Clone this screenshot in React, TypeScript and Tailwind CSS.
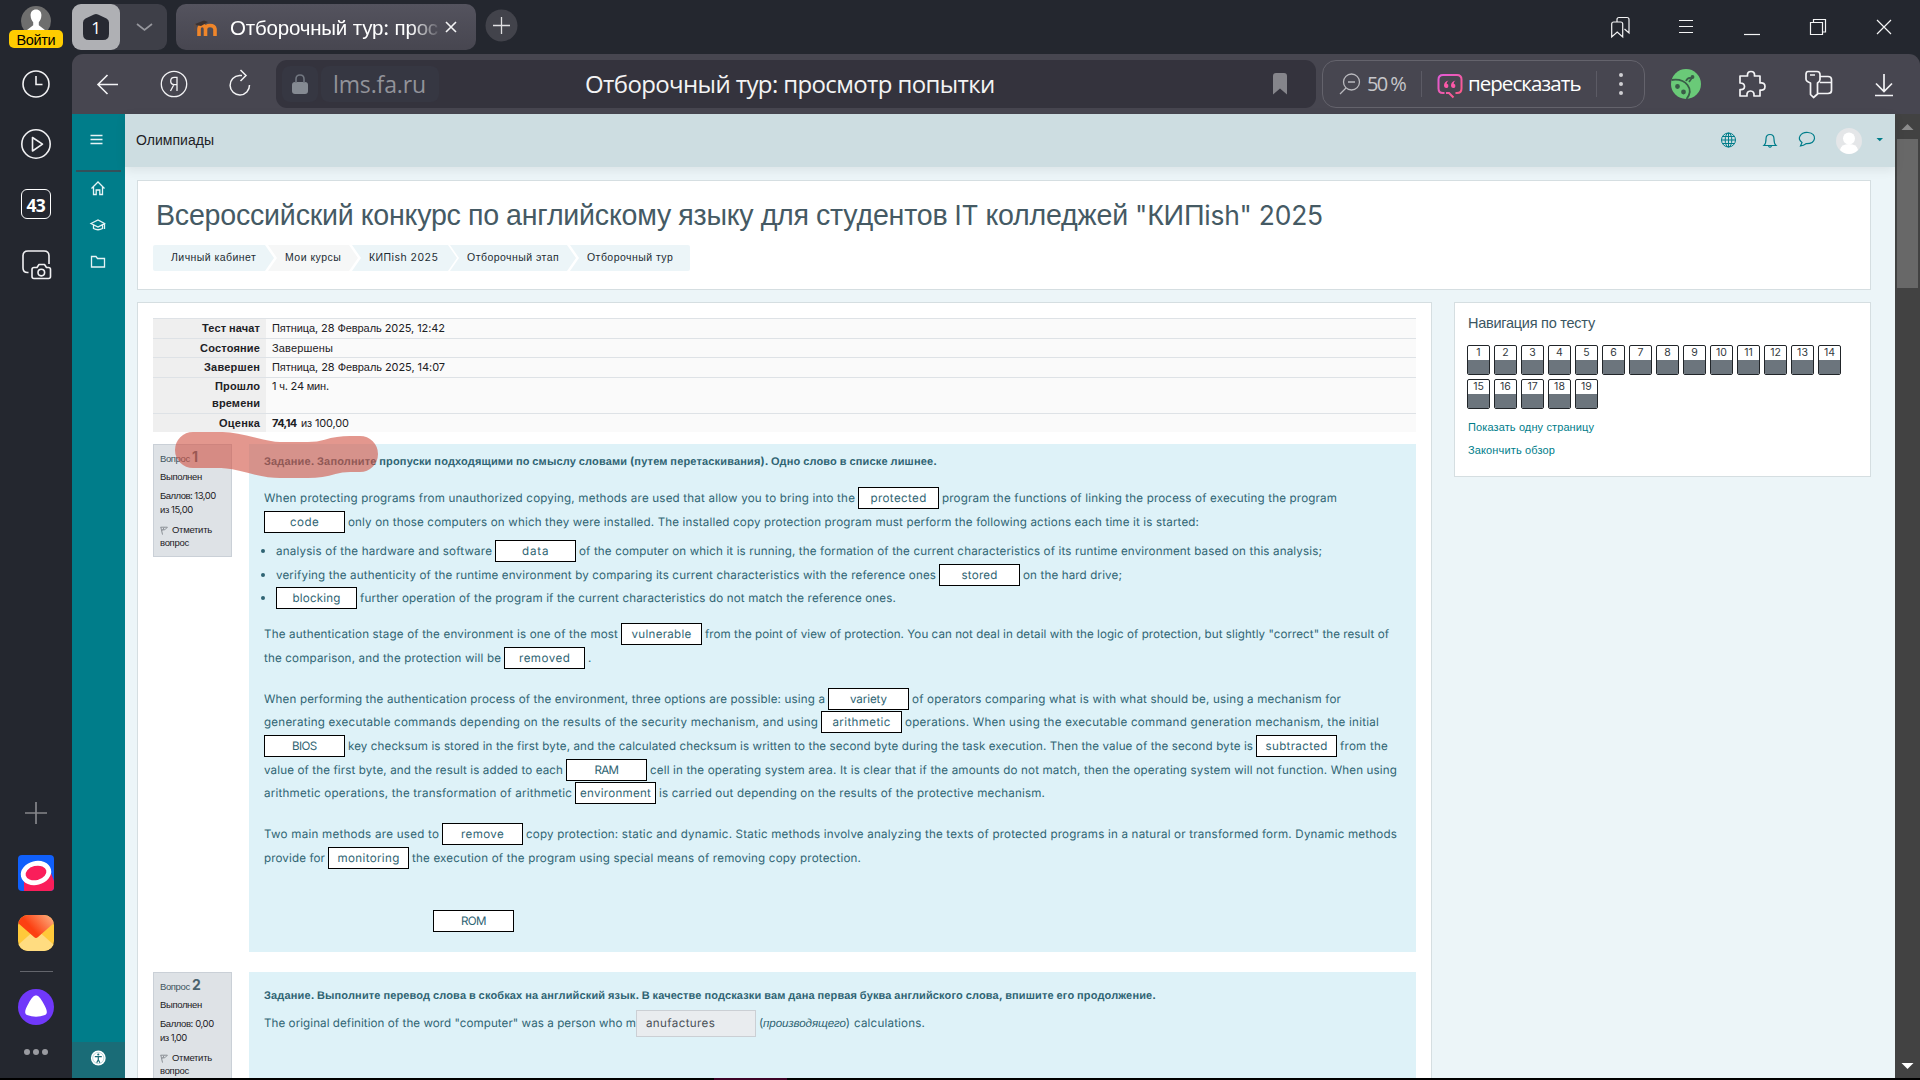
import React, { useLayoutEffect, useRef, useState } from "react";

type FitProps = { t: string; w: number; className?: string };

/** Single-line text whose tracking is adjusted so that it spans exactly `w` pixels. */
function Fit({ t, w, className = "" }: FitProps) {
  const ref = useRef<HTMLSpanElement>(null);
  const [ls, setLs] = useState(0);
  useLayoutEffect(() => {
    const el = ref.current;
    if (!el) return;
    el.style.letterSpacing = "0px";
    const natural = el.getBoundingClientRect().width;
    const next = (w - natural) / Math.max(1, t.length - 0.5);
    el.style.letterSpacing = next + "px";
    setLs(next);
  }, [t, w]);
  return (
    <span className={"block shrink-0 whitespace-pre " + className} style={{ width: w }}>
      <span ref={ref} className="inline-block whitespace-pre" style={{ letterSpacing: ls }}>
        {t.split(/([\u0400-\u04FF]+)/).map((p, i) =>
          i % 2 ? (
            <span key={i} className="font-['Liberation_Sans',sans-serif]">{p}</span>
          ) : (
            p
          )
        )}
      </span>
    </span>
  );
}

type Part = ["t", string, number] | ["b", string, number];

function Line({ parts, h = "h-6" }: { parts: Part[]; h?: string }) {
  return (
    <div className={"flex items-start gap-[3px] " + h}>
      {parts.map(([k, s, w], i) =>
        k === "b" ? (
          <span key={i} className="flex h-[22px] w-[81px] shrink-0 items-center justify-center border border-black bg-white leading-5">
            <Fit t={s} w={w} />
          </span>
        ) : (
          <Fit key={i} t={s} w={w} className="leading-[22px]" />
        )
      )}
    </div>
  );
}

function Bullet({ parts, h }: { parts: Part[]; h?: string }) {
  return (
    <li className="flex">
      <span className="mt-[9px] -ml-[3px] mr-[11px] h-1 w-1 rounded-full bg-[#2f6473]" />
      <Line parts={parts} h={h} />
    </li>
  );
}

function Info({ n, nw, score, sw, total, tw, last }: { n: string; nw: number; score: string; sw: number; total: string; tw: number; last?: boolean }) {
  return (
    <div className={"w-[79px] shrink-0 border border-[#cad0d7] bg-[#dee2e6] pl-1.5 text-[9.5px] leading-[14px] text-[#1d2125] " + (last ? "h-[106px] border-b-0" : "h-[113px]")}>
      <div className="mt-[4px] flex h-[18px] items-center gap-[2px]">
        <Fit t="Вопрос" w={30} className="pt-px text-[#3f5560]" />
        <Fit t={n} w={nw} className="-mt-[3px] text-[14px] font-bold text-[#4a626d]" />
      </div>
      <Fit t="Выполнен" w={42} className="mt-[3px]" />
      <Fit t={score} w={sw} className="mt-[5px]" />
      <Fit t={total} w={tw} />
      <div className="mt-[6px] flex items-center gap-[4px]">
        <svg width="8" height="9" viewBox="0 0 8 9" fill="none" stroke="#8b9096" strokeWidth="1">
          <path d="M.6 1.200h6.800L4.800 3.800H2.200M.8 1l1.700 7.600M4 1.500L2.600 4.500" />
        </svg>
        <Fit t="Отметить" w={40} />
      </div>
      <Fit t="вопрос" w={29} className="-mt-px" />
    </div>
  );
}

function Row({ th, children, h = "h-5" }: { th: [string, number][]; children: React.ReactNode; h?: string }) {
  return (
    <div className={"flex border-t border-[#dee2e6] " + h}>
      <div className="flex w-[113px] flex-col items-end bg-[#efefef] pr-1.5 font-bold leading-[18px]">
        {th.map(([s, n], i) => (
          <Fit key={s} t={s} w={n} className={i ? "-mt-px" : th.length > 1 ? "-mt-px" : ""} />
        ))}
      </div>
      <div className={"flex flex-1 gap-1 bg-[#fafafa] pl-1.5 " + (th.length > 1 ? "leading-4" : "leading-[18px]")}>{children}</div>
    </div>
  );
}

function Sidebar() {
  const s = { fill: "none", stroke: "#f1f1f3", strokeWidth: 1.6 } as const;
  return (
    <aside className="flex w-[72px] shrink-0 flex-col items-center bg-[#24272f]">
      <div className="flex h-[54px] w-full flex-col items-center">
        <svg className="mt-1.5" width="30" height="24" viewBox="0 0 30 24">
          <circle cx="15" cy="15" r="15" fill="#6e6e6e" />
          <path d="M15 3.500c3.500 0 5.600 2.600 5.400 6-.1 3-1.400 5.500-2.600 6.700v3L24 24H6l6.200-4.800v-3C11 15 9.700 12.500 9.600 9.500 9.400 6.100 11.500 3.500 15 3.500z" fill="#fff" />
        </svg>
        <div className="flex h-[18px] w-[54px] items-center justify-center rounded-[5px] bg-[#fc0] text-[14.5px] leading-[18px] text-black">
          <Fit t="Войти" w={39} className="mt-[2px]" />
        </div>
      </div>
      <svg width="72" height="60" {...s}>
        <circle cx="36" cy="30" r="13" />
        <path d="M36 22v8.500h6.500" />
      </svg>
      <svg width="72" height="60" {...s}>
        <circle cx="36" cy="30" r="14.200" />
        <path d="M32.500 23.500v13.500L42.500 30.200z" strokeLinejoin="round" />
      </svg>
      <div className="flex h-[60px] items-center">
        <div className="flex h-[30px] w-[30px] items-center justify-center rounded-[6px] border-[1.5px] border-white text-white">
          <Fit t="43" w={19} className="mt-px font-['Open_Sans',sans-serif] text-[17.5px] font-bold leading-7" />
        </div>
      </div>
      <svg width="72" height="60" {...s}>
        <path d="M28.500 38.500h-1q-4.500 0-4.500-4.500V22q0-5 5-5h16q5 0 5 5v8" />
        <path d="M34 33.500h3l2-3h5.500l2 3h2q2 0 2 2v7q0 2-2 2H34q-2 0-2-2v-7q0-2 2-2z" strokeLinejoin="round" />
        <circle cx="41.300" cy="38.600" r="3.300" />
      </svg>
      <div className="flex-1" />
      <svg width="72" height="60" fill="none" stroke="#85868b" strokeWidth="1.700">
        <path d="M25 30h22M36 19v22" />
      </svg>
      <div className="flex h-[60px] items-center">
        <svg width="36" height="36" viewBox="0 0 36 36">
          <defs><clipPath id="q"><rect width="36" height="36" rx="4" /></clipPath></defs>
          <g clipPath="url(#q)">
            <rect width="36" height="36" fill="#1060fb" />
            <path d="M6 26L33 18l3 8v10H6z" fill="#fa1e5a" />
            <ellipse cx="18" cy="18" rx="13" ry="9.500" transform="rotate(-14 18 18)" fill="#fa1e5a" stroke="#fff" strokeWidth="4.800" />
          </g>
        </svg>
      </div>
      <div className="flex h-[60px] items-center">
        <svg width="36" height="36" viewBox="0 0 36 36">
          <defs>
            <clipPath id="m"><rect width="36" height="36" rx="10" /></clipPath>
            <linearGradient id="mg" x1="0.100" y1="0.600" x2="1" y2="0.100"><stop offset="0.250" stopColor="#fc4012" /><stop offset="1" stopColor="#fdb080" /></linearGradient>
          </defs>
          <g clipPath="url(#m)">
            <rect width="36" height="36" fill="#ffc93a" />
            <path d="M0 30L18 14l18 16v6H0z" fill="#ffdc80" />
            <path d="M0 0h36v8L20 22q-2 2-4 0L0 8z" fill="url(#mg)" />
          </g>
        </svg>
      </div>
      <div className="h-[14px] pt-2"><div className="h-px w-[33px] bg-[#63656c]" /></div>
      <svg width="72" height="60">
        <circle cx="36" cy="30" r="18" fill="#7038fa" />
        <path d="M36 18.500c2.500 0 4.500 2.500 7.500 8 3.200 5.800 4.800 9.500 1.500 11.500q-9 3.400-18 0c-3.300-2-1.700-5.700 1.500-11.500 3-5.500 5-8 7.500-8z" fill="#fff" />
      </svg>
      <svg width="72" height="41" fill="#9a9ba1">
        <circle cx="27" cy="15" r="3" /><circle cx="36" cy="15" r="3" /><circle cx="45" cy="15" r="3" />
      </svg>
    </aside>
  );
}

function TabStrip() {
  return (
    <div className="flex h-[54px] shrink-0 items-start bg-[#24272f] pt-1">
      <div className="flex h-[46px] w-[95px] rounded-[9px] bg-[#3e3f48]">
        <div className="flex h-[46px] w-12 items-center justify-center rounded-[9px] bg-[#afb0b4]">
          <div className="relative flex h-7 w-7 items-center justify-center">
            <svg className="absolute inset-0" width="28" height="28">
              <path d="M12 1.500q2-1 4 0l8.500 4q2.500 1.300 2.500 4V21q0 6-6 6H7q-6 0-6-6V9.500q0-2.700 2.500-4z" fill="#272932" />
            </svg>
            <span className="relative font-['Open_Sans',sans-serif] text-[17px] font-medium leading-none text-white">1</span>
          </div>
        </div>
        <svg width="47" height="46" fill="none" stroke="#96979d" strokeWidth="1.700"><path d="M17 20l7.500 6 7.500-6" /></svg>
      </div>
      <div className="ml-[9px] flex h-[46px] w-[300px] items-center rounded-[10px] bg-gradient-to-b from-[#54535e] to-[#474650]">
        <svg className="ml-[17px] mt-1 shrink-0" width="25" height="18" viewBox="0 0 25 18" fill="none">
          <path d="M6 16V9q0-3.500 3.200-3.500T12.500 9v7M12.500 9q0-3.500 4.500-3.500T22 9v7" stroke="#f0862a" strokeWidth="3.600" />
          <path d="M2 4L11 .5l4 1.500-7 4-5-1z" fill="#3c3230" /><path d="M2 4v7" stroke="#6a4d3c" />
        </svg>
        <div className="ml-[12px] mt-px w-[212px] text-[20.500px] leading-8 text-white [mask-image:linear-gradient(to_right,black_85%,transparent_100%)]">
          <Fit t="Отборочный тур: прос" w={208} />
        </div>
        <svg className="ml-[2px]" width="14" height="14" fill="none" stroke="#f4f4f5" strokeWidth="1.600"><path d="M2 2l10 10M12 2L2 12" /></svg>
      </div>
      <svg className="ml-[9px] mt-[5px]" width="33" height="33"><circle cx="16.500" cy="16.500" r="16" fill="#42434b" /><path d="M16.500 8v17M8 16.500h17" stroke="#e0e0e2" strokeWidth="1.300" /></svg>
      <div className="flex-1" />
      <svg className="mt-2" width="310" height="30" viewBox="1610 12 310 30" fill="none" stroke="#f4f4f5" strokeWidth="1.200">
        <path d="M1611.700 24q0-2 2-2h7q2 0 2 2v13l-5.500-5-5.500 5zM1617 21.500v-2q0-2 2-2h8q2 0 2 2v13.500l-4.500-4" />
        <path d="M1679 20.500h14M1679 26.500h14M1679 32.500h14" />
        <path d="M1744 34.500h16" />
        <path d="M1810.500 22.500h12v12h-12zM1813.500 22v-2.500h12v12.500h-2.500" />
        <path d="M1877 20l14 14M1891 20l-14 14" />
      </svg>
    </div>
  );
}

function Toolbar() {
  return (
    <div className="shrink-0 bg-[#24272f]">
      <div className="flex h-[60px] items-center rounded-t-[11px] bg-[#474650]">
        <svg width="204" height="60" viewBox="72 54 204 60" fill="none" stroke="#f3f3f5" strokeWidth="1.600">
          <path d="M98 84.500h20M107.500 75l-9.500 9.500 9.500 9.500" />
          <circle cx="174" cy="84" r="12.700" strokeWidth="1.300" />
          <path d="M177 91V77.300h-2.500q-3.800 0-3.800 3.700t3.800 3.700H177M174 84.500L170.500 91" strokeWidth="1.300" />
          <path d="M242 75.500h-2.500A9.700 9.700 0 1 0 249.500 85M240.500 70l5.500 5.500-5.500 5.500" strokeWidth="1.500" />
        </svg>
        <div className="flex h-12 w-[1040px] items-center rounded-[11px] bg-[#34333d] pl-1.5 pr-[28px]">
          <div className="flex h-9 w-9 items-center justify-center rounded-[8px] bg-[#363742]">
            <svg width="16" height="20" viewBox="0 0 16 20"><rect y="8" width="16" height="12" rx="3" fill="#858a92" /><path d="M4 9V5q0-4 4-4t4 4v4" fill="none" stroke="#727780" strokeWidth="1.600" /></svg>
          </div>
          <div className="ml-[3px] flex h-9 w-[118px] items-center rounded-[8px] bg-[#363742] pl-[12px] font-['Open_Sans',sans-serif] text-[23px] text-[#92939a]">
            <Fit t="lms.fa.ru" w={93} />
          </div>
          <div className="ml-[146px] text-[24px] text-[#f3f3f4]">
            <Title t="Отборочный тур: просмотр попытки" w={410} />
          </div>
          <div className="flex-1" />
          <svg width="16" height="22"><path d="M1 21.500V3q0-3 3-3h8q3 0 3 3v18.500l-7-6z" fill="#85858b" /></svg>
        </div>
        <div className="ml-[6px] flex h-12 w-[323px] items-center rounded-[14px] border border-[#64636c]">
          <svg className="ml-[16px]" width="22" height="22" fill="none" stroke="#b9b9be" strokeWidth="1.300"><circle cx="12.500" cy="9" r="8" /><path d="M7 15L1 21M9 9h7" /></svg>
          <div className="ml-[6px] font-['Open_Sans',sans-serif] text-[20px] text-[#c6c6ca]"><Fit t="50 %" w={39} /></div>
          <div className="ml-[15px] h-[26px] w-px bg-[#5c5b65]" />
          <svg className="ml-[15px] mt-[3px]" width="26" height="26" viewBox="0 0 26 26" fill="none">
            <defs><linearGradient id="pk" x1="0" y1="0" x2="1" y2="1"><stop stopColor="#e25bd8" /><stop offset="1" stopColor="#ff5a80" /></linearGradient></defs>
            <path d="M7.500 20H6q-4.500 0-4.500-4.500v-9Q1.500 2 6 2h14q4.500 0 4.500 4.500v9Q24.500 20 20 20h-1.500M9 20h3l4.500 4.500" stroke="url(#pk)" strokeWidth="2" />
            <path d="M11.500 7.500q-2 1.500-1.800 3.200a2.200 2.200 0 1 1-2.700 2.100q-.2-4 4.500-5.300zM18.500 7.500q-2 1.500-1.800 3.200a2.200 2.200 0 1 1-2.700 2.100q-.2-4 4.500-5.300z" fill="#fb58a8" />
          </svg>
          <div className="-mt-px ml-[5px] text-[20.500px] font-medium text-white"><Title t="пересказать" w={113} /></div>
          <div className="ml-[15px] h-[26px] w-px bg-[#5c5b65]" />
          <svg className="ml-[20px]" width="8" height="24" fill="#cfcfd2"><circle cx="4" cy="3" r="2" /><circle cx="4" cy="12" r="2" /><circle cx="4" cy="21" r="2" /></svg>
        </div>
        <svg width="275" height="60" viewBox="1645 54 275 60" fill="none" stroke="#f3f3f5" strokeWidth="1.700">
          <circle cx="1686" cy="84" r="15" fill="#6aca78" stroke="none" />
          <g stroke="#3a5d48" strokeWidth="1.800"><path d="M1671.500 80q11-1.500 16 5t-1 14M1686 81q1.500-4 5.500-3" /><path d="M1689 82l3.500-5" /><circle cx="1692.500" cy="77" r="1" /><circle cx="1677.500" cy="86.500" r="1.500" fill="#3a5d48" /><circle cx="1683.500" cy="92" r="1.500" fill="#3a5d48" /></g>
          <path d="M1741 76h6.500q-.5-4.500 3.500-4.500t3.500 4.500h5.500v7q5-.8 5 3.500t-5 3.500v6h-6q.5-5-3.500-5t-3.500 5H1740v-6.500q4.500.500 4.500-3t-4.500-3.500V76z" strokeLinejoin="round" />
          <path d="M1808 71.500h9q3 0 3 3v5q0 2-2.500 3.500v11l-4 3.500-3-3V83q-4.500-1.500-4.500-4v-4.500q0-3 2-3zM1810 75h5" strokeLinejoin="round" />
          <path d="M1820 76.500h8q3.500 0 3.500 3v11q0 3-3.500 3h-10.500M1820 82.500h11" />
          <path d="M1884 74v17M1876 83.500l8 8 8-8M1875 95.500h18" />
        </svg>
      </div>
    </div>
  );
}

function Title({ t, w }: { t: string; w: number }) {
  return <Fit t={t} w={w} className="[&_span]:font-['Open_Sans',sans-serif]" />;
}

function Rail() {
  return (
    <nav className="flex w-[53px] shrink-0 flex-col bg-[#007d8a]">
      <svg width="53" height="180" viewBox="72 114 53 180" fill="none" stroke="#e6f4f5" strokeWidth="1.300">
        <path d="M90.500 135.500h12M90.500 139.500h12M90.500 143.500h12" />
        <path d="M76 171h45" stroke="#34505a" strokeWidth="2" />
        <path d="M91.500 188.500l6.500-6.500 6.500 6.500M93.500 187v7.500h2.700v-4.500h3.600v4.500h2.700V187" />
        <path d="M91 223.500l7-3.500 6.500 3.500-6.500 3.500zM93.500 225v3.500q4.500 2.500 9 0V225M104.500 224v5" />
        <path d="M91.500 256.500h4.500l1.500 2h7v8.500h-13z" />
      </svg>
      <div className="flex-1" />
      <div className="h-9 bg-[#1a6c77]">
        <svg width="53" height="36" viewBox="72 1042 53 36">
          <circle cx="98.300" cy="1058" r="7.400" fill="#fff" /><circle cx="98.300" cy="1058" r="5.600" fill="none" stroke="#9fc6ca" strokeWidth=".7" />
          <circle cx="98.300" cy="1054.500" r="1.100" fill="#1a6c77" /><path d="M94.800 1056.700h7M98.300 1056.700v3l-1.600 3M98.300 1059.700l1.600 3" stroke="#1a6c77" strokeWidth="1.200" fill="none" />
        </svg>
      </div>
    </nav>
  );
}

function Crumbs() {
  const items: { t: string; w: number; c: string; ml: string; clip: string }[] = [
    { t: "Личный кабинет", w: 85, c: "w-[121px] bg-[#ecf5f8] pl-[18px]", ml: "rounded-l-[2px]", clip: "[clip-path:polygon(0_0,calc(100%-9px)_0,100%_50%,calc(100%-9px)_100%,0_100%)]" },
    { t: "Мои курсы", w: 56, c: "w-[90px] bg-[#f6f7f7] pl-[17px]", ml: "-ml-[6px]", clip: "[clip-path:polygon(0_0,calc(100%-9px)_0,100%_50%,calc(100%-9px)_100%,0_100%,9px_50%)]" },
    { t: "КИПish 2025", w: 69, c: "w-[105px] bg-[#ecf5f8] pl-[17px]", ml: "-ml-[6px]", clip: "[clip-path:polygon(0_0,calc(100%-9px)_0,100%_50%,calc(100%-9px)_100%,0_100%,9px_50%)]" },
    { t: "Отборочный этап", w: 92, c: "w-[126px] bg-[#ecf5f8] pl-[17px]", ml: "-ml-[7px]", clip: "[clip-path:polygon(0_0,calc(100%-9px)_0,100%_50%,calc(100%-9px)_100%,0_100%,9px_50%)]" },
    { t: "Отборочный тур", w: 86, c: "w-[120px] bg-[#ecf5f8] pl-[17px]", ml: "-ml-[6px] rounded-r-[2px]", clip: "[clip-path:polygon(0_0,100%_0,100%_100%,0_100%,9px_50%)]" },
  ];
  return (
    <div className="flex h-[26px] text-[10.500px] leading-6 text-[#1d2c33]">
      {items.map((i) => (
        <div key={i.t} className={"h-[26px] shrink-0 " + i.c + " " + i.ml + " " + i.clip}>
          <Fit t={i.t} w={i.w} />
        </div>
      ))}
    </div>
  );
}

function QuestionOne() {
  return (
    <div className="h-[508px] w-[1167px] bg-[#def2f8] pl-[15px] text-[11.600px] text-[#2f6473] [text-rendering:geometricPrecision]">
      <div className="h-[43px] pt-[6px] text-[11px] font-bold leading-[22px]">
        <Fit t="Задание. Заполните пропуски подходящими по смыслу словами (путем перетаскивания). Одно слово в списке лишнее." w={673} />
      </div>
      <div>
        <Line parts={[["t", "When protecting programs from unauthorized copying, methods are used that allow you to bring into the", 591], ["b", "protected", 56], ["t", "program the functions of linking the process of executing the program", 395]]} />
        <Line parts={[["b", "code", 29], ["t", "only on those computers on which they were installed. The installed copy protection program must perform the following actions each time it is started:", 851]]} />
      </div>
      <ul className="mt-[5px]">
        <Bullet parts={[["t", "analysis of the hardware and software", 216], ["b", "data", 27], ["t", "of the computer on which it is running, the formation of the current characteristics of its runtime environment based on this analysis;", 743]]} />
        <Bullet h="h-[23px]" parts={[["t", "verifying the authenticity of the runtime environment by comparing its current characteristics with the reference ones", 660], ["b", "stored", 36], ["t", "on the hard drive;", 99]]} />
        <Bullet parts={[["b", "blocking", 48], ["t", "further operation of the program if the current characteristics do not match the reference ones.", 536]]} />
      </ul>
      <div className="mt-[12px]">
        <Line parts={[["t", "The authentication stage of the environment is one of the most", 354], ["b", "vulnerable", 60], ["t", 'from the point of view of protection. You can not deal in detail with the logic of protection, but slightly "correct" the result of', 684]]} />
        <Line parts={[["t", "the comparison, and the protection will be", 237], ["b", "removed", 51], ["t", ".", 3]]} />
      </div>
      <div className="mt-[17px]">
        <Line h="h-[23px]" parts={[["t", "When performing the authentication process of the environment, three options are possible: using a", 561], ["b", "variety", 37], ["t", "of operators comparing what is with what should be, using a mechanism for", 429]]} />
        <Line parts={[["t", "generating executable commands depending on the results of the security mechanism, and using", 554], ["b", "arithmetic", 58], ["t", "operations. When using the executable command generation mechanism, the initial", 474]]} />
        <Line parts={[["b", "BIOS", 25], ["t", "key checksum is stored in the first byte, and the calculated checksum is written to the second byte during the task execution. Then the value of the second byte is", 905], ["b", "subtracted", 62], ["t", "from the", 48]]} />
        <Line h="h-[23px]" parts={[["t", "value of the first byte, and the result is added to each", 299], ["b", "RAM", 24], ["t", "cell in the operating system area. It is clear that if the amounts do not match, then the operating system will not function. When using", 747]]} />
        <Line parts={[["t", "arithmetic operations, the transformation of arithmetic", 308], ["b", "environment", 71], ["t", "is carried out depending on the results of the protective mechanism.", 386]]} />
      </div>
      <div className="mt-[17px]">
        <Line parts={[["t", "Two main methods are used to", 175], ["b", "remove", 43], ["t", "copy protection: static and dynamic. Static methods involve analyzing the texts of protected programs in a natural or transformed form. Dynamic methods", 871]]} />
        <Line parts={[["t", "provide for", 61], ["b", "monitoring", 62], ["t", "the execution of the program using special means of removing copy protection.", 449]]} />
      </div>
      <div className="ml-[169px] mt-[39px]">
        <Line parts={[["b", "ROM", 25]]} />
      </div>
    </div>
  );
}

function QuizNav() {
  return (
    <div className="ml-[22px] h-[175px] w-[417px] shrink-0 border border-[#d5dee1] bg-white pl-[12px] pt-[10px]">
      <div className="pl-px text-[14.500px] leading-5 text-[#3b5662]"><Fit t="Навигация по тесту" w={127} /></div>
      <div className="mt-[12px] flex w-[390px] flex-wrap gap-1">
        {Array.from({ length: 19 }, (_, i) => (
          <div key={i} className="flex h-[30px] w-[23px] flex-col overflow-hidden rounded-[2px] border border-[#212529] bg-white text-center text-[10.500px] leading-[13px] text-[#343a40]">
            <div className="h-[14px]">{i + 1}</div>
            <div className="flex-1 bg-[#6c757d]" />
          </div>
        ))}
      </div>
      <div className="mt-[8px] flex flex-col gap-[3px] pl-px text-[11px] leading-5 text-[#007d8a]">
        <Fit t="Показать одну страницу" w={126} />
        <Fit t="Закончить обзор" w={87} />
      </div>
    </div>
  );
}

function Page() {
  return (
    <main className="relative flex min-w-0 flex-1 flex-col bg-[#ecf5f8]">
      <header className="flex h-[53px] shrink-0 items-center bg-[#cddde1] pl-[11px] text-[14px] text-[#1d2125] shadow-[0_3px_10px_rgba(0,0,0,0.08)]">
        <Fit t="Олимпиады" w={78} className="-mt-px" />
        <div className="flex-1" />
        <svg width="180" height="40" viewBox="1715 121 180 40" fill="none" stroke="#007d8a" strokeWidth="1">
          <circle cx="1728.500" cy="140" r="7" /><ellipse cx="1728.500" cy="140" rx="3.300" ry="7" /><path d="M1721.500 140h14M1728.500 133v14M1722.500 136.500h12M1722.500 143.500h12" />
          <path d="M1764 145.500q2-1.800 2-6.500 0-4.500 4-4.500t4 4.500q0 4.700 2 6.500zM1768.500 146q1.500 2.500 3 0" strokeWidth="1.200" />
          <path d="M1800.500 146l1.500-3.500q-4-3-2-6.500 2.500-4 8-3.500 7 .8 6.500 6.200-1 5.300-8.500 5-2.500 1.800-5.500 2.300z" strokeWidth="1.200" />
          <g stroke="none"><circle cx="1849" cy="141" r="13" fill="#e4e6e8" /><circle cx="1849" cy="138.500" r="6" fill="#fff" /><path d="M1840 150q1-6 9-6t9 6q-4 4-9 4t-9-4z" fill="#fff" /><path d="M1876.500 138h6.500l-3.200 3.300z" fill="#007d8a" /></g>
        </svg>
      </header>
      <section className="ml-[12px] mt-[13px] h-[110px] w-[1734px] shrink-0 border border-[#d5dee1] bg-white pl-[15px]">
        <div className="ml-[3px] h-16 pt-[14px] text-[26.400px] leading-10 text-[#455a64]">
          <Fit
            t={'Всероссийский конкурс по английскому языку для студентов IT колледжей "КИПish" 2025'}
            w={1167}
            className="[&_span_span]:text-[28.600px]"
          />
        </div>
        <Crumbs />
      </section>
      <div className="ml-[12px] mt-[12px] flex min-h-0 flex-1 items-start">
        <section className="h-full w-[1295px] shrink-0 overflow-hidden border border-b-0 border-[#d5dee1] bg-white pl-[15px] pt-[15px]">
          <div className="w-[1263px] text-[11px] text-[#1d2125]">
            <Row th={[["Тест начат", 58]]}><Fit t="Пятница, 28 Февраль 2025, 12:42" w={173} /></Row>
            <Row h="h-[19px]" th={[["Состояние", 60]]}><Fit t="Завершены" w={61} /></Row>
            <Row th={[["Завершен", 56]]}><Fit t="Пятница, 28 Февраль 2025, 14:07" w={173} /></Row>
            <Row h="h-9" th={[["Прошло", 45], ["времени", 48]]}><Fit t="1 ч. 24 мин." w={57} /></Row>
            <Row h="h-[19px]" th={[["Оценка", 41]]}><Fit t="74,14" w={25} className="font-bold" /><Fit t="из 100,00" w={48} /></Row>
          </div>
          <div className="mt-[12px] flex items-start gap-[17px]">
            <Info n="1" nw={5} score="Баллов: 13,00" sw={56} total="из 15,00" tw={33} />
            <QuestionOne />
          </div>
          <div className="mt-5 flex items-start gap-[17px]">
            <Info n="2" nw={8} score="Баллов: 0,00" sw={54} total="из 1,00" tw={27} last />
            <div className="h-[106px] w-[1167px] bg-[#def2f8] pl-[15px] text-[11.600px] text-[#2f6473] [text-rendering:geometricPrecision]">
              <div className="h-[38px] pt-[12px] text-[11px] font-bold leading-[22px]">
                <Fit t="Задание. Выполните перевод слова в скобках на английский язык. В качестве подсказки вам дана первая буква английского слова, впишите его продолжение." w={892} />
              </div>
              <div className="flex h-[27px] items-center">
                <Fit t={'The original definition of the word "computer" was a person who m'} w={372} />
                <div className="flex h-[27px] w-[120px] items-center border border-[#cbcfd4] bg-[#e9ecef] pl-[9px] text-[#495057]">
                  <Fit t="anufactures" w={69} />
                </div>
                <Fit t="(производящего)" w={91} className="ml-[3px] [&_span_span]:italic" />
                <Fit t="calculations." w={71} className="ml-[4px]" />
              </div>
            </div>
          </div>
        </section>
        <QuizNav />
      </div>
      <svg className="pointer-events-none absolute left-[40px] top-[310px]" width="230" height="64" viewBox="165 424 230 64" fill="none">
        <path d="M193 450H222C246 451 258 460 280 460H308C332 460 328 454 350 454H360" stroke="#d05243" strokeOpacity=".6" strokeWidth="36" strokeLinecap="round" />
      </svg>
    </main>
  );
}

export default function App() {
  return (
    <div className="flex h-[1080px] w-[1920px] flex-col overflow-hidden bg-black font-[Inter,sans-serif]">
      <div className="flex h-[1078px] shrink-0">
        <Sidebar />
        <div className="flex min-w-0 flex-1 flex-col">
          <TabStrip />
          <Toolbar />
          <div className="flex min-h-0 flex-1">
            <Rail />
            <Page />
            <div className="flex w-[25px] shrink-0 flex-col items-center bg-[#424242]">
              <svg width="25" height="25" fill="#8c8c8c"><path d="M6.500 16l6-6 6 6z" /></svg>
              <div className="h-[149px] w-[21px] bg-[#686868]" />
              <div className="flex-1" />
              <svg width="25" height="22" fill="#fff"><path d="M6.500 7h12l-6 6z" /></svg>
            </div>
          </div>
        </div>
      </div>
      <div className="ml-[714px] h-0.5 w-[73px] bg-[#3d0326]" />
    </div>
  );
}
